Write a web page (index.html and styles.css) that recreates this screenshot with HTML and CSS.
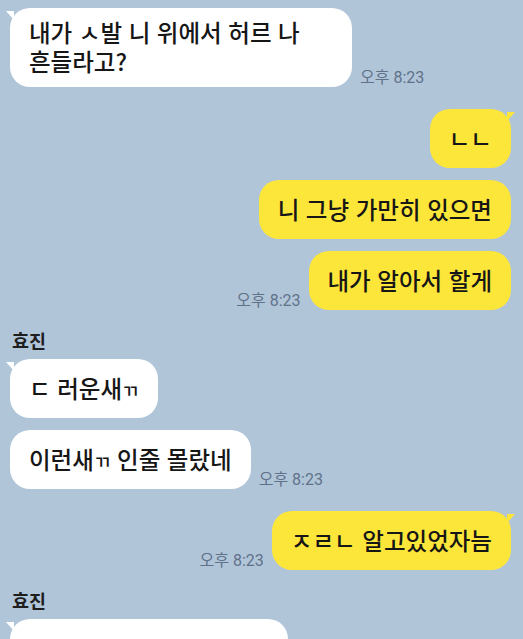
FILE: index.html
```html
<!DOCTYPE html>
<html lang="ko">
<head>
  <meta charset="UTF-8">
  <meta name="viewport" content="width=device-width, initial-scale=1.0">
  <title>채팅</title>
  <link rel="stylesheet" href="styles.css">
</head>
<body>

<div class="chat">
  <div class="row in">
    <div class="bubble tail tight">내가 ㅅ발 니 위에서 허르 나 흔들라고?</div>
    <span class="time">오후 8:23</span>
  </div>

  <div class="row out group">
    <div class="bubble tail">ㄴㄴ</div>
  </div>
  <div class="row out">
    <div class="bubble">니 그냥 가만히 있으면</div>
  </div>
  <div class="row out">
    <span class="time">오후 8:23</span>
    <div class="bubble">내가 알아서 할게</div>
  </div>

  <div class="name">효진</div>
  <div class="row in first">
    <div class="bubble tail">ㄷ 러운새<span class="jamo">ㄲ</span></div>
  </div>
  <div class="row in">
    <div class="bubble">이런새<span class="jamo">ㄲ</span> 인줄 몰랐네</div>
    <span class="time">오후 8:23</span>
  </div>

  <div class="row out group">
    <span class="time">오후 8:23</span>
    <div class="bubble tail">ㅈㄹㄴ 알고있었자늠</div>
  </div>

  <div class="name">효진</div>
  <div class="row in first">
    <div class="bubble tail blank"></div>
  </div>
</div>

</body>
</html>
```

FILE: styles.css
```css
body {
  margin: 0;
  background-color: #b1c5d9;
  font-family: "Noto Sans CJK KR", "Noto Sans", sans-serif;
  color: #161616;
  overflow: hidden;
}

.chat {
  display: flex;
  flex-direction: column;
  padding: 8px 12px 0 10px;
}

.row {
  display: flex;
  align-items: flex-end;
  gap: 8px;
  margin-top: 12px;
}

.row:first-child {
  margin-top: 0;
}

.row.out {
  justify-content: flex-end;
}

.row.group {
  margin-top: 22px;
}

.row.first {
  margin-top: 7px;
}

.bubble {
  position: relative;
  max-width: 342px;
  box-sizing: border-box;
  padding: 15px 19px;
  border-radius: 20px;
  background-color: #fff;
  font-size: 23.5px;
  line-height: 29px;
  font-weight: 500;
  word-break: keep-all;
}

.bubble.tight {
  padding-top: 10px;
  padding-bottom: 11px;
  width: 342px;
}

.bubble.blank {
  width: 278px;
  height: 59px;
}

.jamo {
  font-size: 18px;
  line-height: 1;
}

.out .bubble {
  background-color: #fde63a;
}

.in .tail::before,
.out .tail::before {
  content: "";
  position: absolute;
  top: 3px;
  width: 0;
  height: 0;
  border-top: 9px solid #fff;
}

.in .tail::before {
  left: -4px;
  border-left: 8px solid transparent;
}

.out .tail::before {
  right: -4px;
  border-top-color: #fde63a;
  border-right: 8px solid transparent;
}

.time {
  font-family: Roboto, "Noto Sans CJK KR", sans-serif;
  font-size: 16px;
  line-height: 18px;
  color: #5f7289;
  white-space: nowrap;
}

.name {
  margin-top: 18px;
  padding-left: 2px;
  font-size: 18.5px;
  line-height: 24px;
  font-weight: 700;
  color: #1e1e1e;
}
```
